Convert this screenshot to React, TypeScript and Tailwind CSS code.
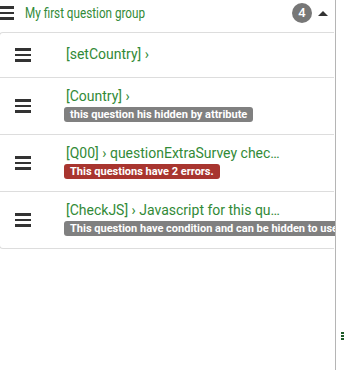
import React from 'react';

const Bars = ({ className = '' }: { className?: string }) => (
  <div className={`flex flex-col gap-[3px] w-[16px] ${className}`}>
    <span className="block h-[2.5px] bg-[#333]" />
    <span className="block h-[2.5px] bg-[#333]" />
    <span className="block h-[2.5px] bg-[#333]" />
  </div>
);

type Row = { title: string; badge?: string; tone?: 'gray' | 'red'; h: string };

const rows: Row[] = [
  { title: '[setCountry] ›', h: 'h-[45px]' },
  { title: '[Country] ›', badge: 'this question his hidden by attribute', tone: 'gray', h: 'h-[57px]' },
  { title: '[Q00] › questionExtraSurvey chec…', badge: 'This questions have 2 errors.', tone: 'red', h: 'h-[57px]' },
  {
    title: '[CheckJS] › Javascript for this qu…',
    badge: 'This question have condition and can be hidden to user',
    tone: 'gray',
    h: 'h-[56px]',
  },
];

const QuestionRow = ({ row, last }: { row: Row; last: boolean }) => (
  <div className={`flex items-center ${row.h} ${last ? '' : 'border-b border-[#ddd]'}`}>
    <div className="w-[66px] shrink-0 pl-[15px]">
      <Bars />
    </div>
    <div className="flex flex-col min-w-0 -mt-[3px]">
      <div className="text-[14px] leading-[18px] text-[#328a37] whitespace-nowrap">{row.title}</div>
      {row.badge && (
        <div
          className={`-ml-[2px] mt-[2px] self-start whitespace-nowrap rounded-[3px] px-[6px] text-[11px] font-bold leading-[15px] text-white ${
            row.tone === 'red' ? 'bg-[#a8352f]' : 'bg-[#808080]'
          }`}
        >
          {row.badge}
        </div>
      )}
    </div>
  </div>
);

export default function App() {
  return (
    <div className="relative w-[347px] h-[370px] bg-white overflow-hidden" style={{ fontFamily: 'Roboto, "Liberation Sans", sans-serif' }}>
      <div className="w-[336px] h-full border-r border-[#b5b5b5] overflow-hidden">
        {/* group header */}
        <div className="flex items-center h-[26px] mb-[6px]">
          <Bars className="-ml-[2px] mr-[11px]" />
          <span className="inline-block w-[100px] origin-left scale-x-[0.78] text-[15px] text-[#328a37] whitespace-nowrap">
            My first question group
          </span>
          <span className="ml-auto flex items-center justify-center w-[20px] h-[20px] rounded-full bg-[#777] text-white text-[13px] font-medium">
            4
          </span>
          <span className="ml-[6px] mr-[7px] w-0 h-0 border-l-[5px] border-r-[5px] border-b-[5px] border-l-transparent border-r-transparent border-b-[#333]" />
        </div>

        {/* question list */}
        <div className="border-t border-b border-l border-[#ddd] rounded-l-[4px] -ml-[1px] mr-[1px]">
          {rows.map((r, i) => (
            <QuestionRow key={r.title} row={r} last={i === rows.length - 1} />
          ))}
        </div>
      </div>

      {/* collapsed side handle */}
      <div className="absolute left-[341px] top-[332px] flex flex-col gap-[1px]">
        <span className="block w-[3px] h-[2px] bg-[#1e5a28]" />
        <span className="block w-[3px] h-[2px] bg-[#1e5a28]" />
        <span className="block w-[3px] h-[2px] bg-[#1e5a28]" />
      </div>
    </div>
  );
}
